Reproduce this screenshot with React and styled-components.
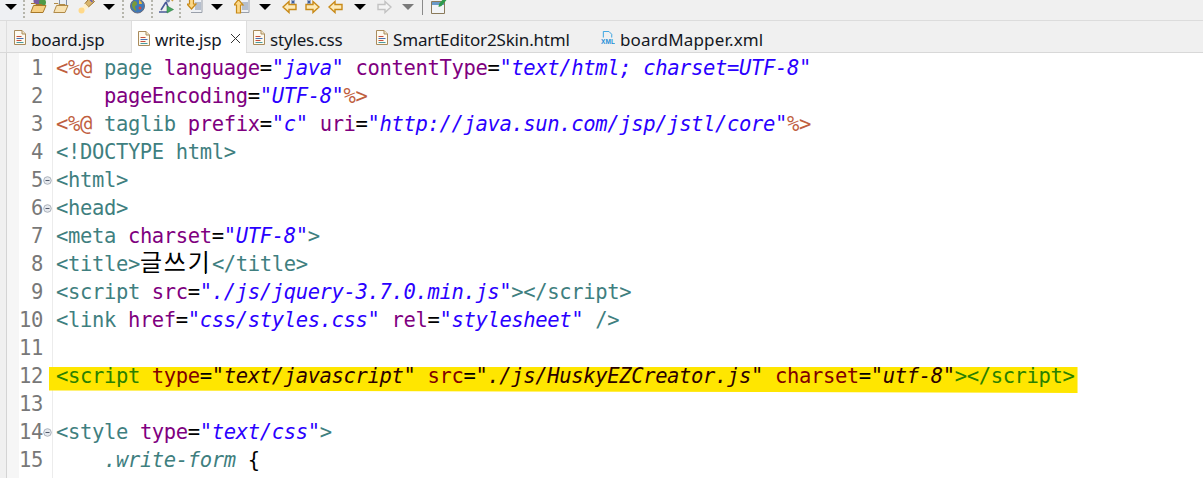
import React from "react";
import styled, { createGlobalStyle } from "styled-components";

const Global = createGlobalStyle`
  html, body { margin: 0; padding: 0; background: #fff; overflow: hidden; }
`;

const Page = styled.div`
  width: 1203px;
  height: 478px;
  overflow: hidden;
  display: flex;
  flex-direction: column;
`;

const Toolbar = styled.div`
  height: 20px;
  flex: none;
  display: flex;
  align-items: flex-end;
  background: linear-gradient(to right, #eef0f3 0 23px, #f0f0f0 23px);
  overflow: hidden;
  padding-left: 5px;
  border-bottom: 1px solid #dcdcdc;
`;

const ToolSlot = styled.div`
  flex: none;
  width: ${(p) => p.$w}px;
  margin-left: ${(p) => p.$ml || 0}px;
  height: 20px;
  display: flex;
  align-items: ${(p) => (p.$top ? "flex-start" : "flex-end")};
  justify-content: center;
  padding-bottom: ${(p) => (p.$top ? 0 : 6)}px;
  padding-top: ${(p) => (p.$top ? 4 : 0)}px;
  box-sizing: border-box;
`;

const Triangle = styled.div`
  width: 0;
  height: 0;
  border-left: 6px solid transparent;
  border-right: 6px solid transparent;
  border-top: 6px solid ${(p) => (p.$off ? "#7a7a7a" : "#000")};
`;

const Dots = styled.div`
  flex: none;
  width: 2px;
  height: 20px;
  margin-left: ${(p) => p.$ml}px;
  background: repeating-linear-gradient(to bottom, #b5b5ac 0 2px, transparent 2px 4px);
`;

const Bar = styled.div`
  flex: none;
  width: 1px;
  height: 16px;
  margin-left: ${(p) => p.$ml}px;
  margin-bottom: 5px;
  background: #8a8a8a;
`;

const TabBar = styled.div`
  height: 32px;
  flex: none;
  display: flex;
  background: #f0f0f0;
  padding-left: 6px;
  box-sizing: border-box;
  border-bottom: 1px solid #d8d8d8;
`;

const Tab = styled.div`
  flex: none;
  width: ${(p) => p.$w}px;
  height: ${(p) => (p.$active ? 32 : 31)}px;
  display: flex;
  align-items: center;
  padding-left: ${(p) => p.$pad}px;
  padding-top: 6px;
  box-sizing: border-box;
  gap: 5px;
  background: ${(p) => (p.$active ? "#fff" : "transparent")};
  border-left: 1px solid #dedede;
  font-family: "Noto Sans", "Open Sans", sans-serif;
  font-size: 17px;
  letter-spacing: ${(p) => p.$ls ?? -0.16}px;
  color: #14181f;
  white-space: nowrap;
  ${(p) => p.$plain && "border-left: none;"}
`;

const TabLabel = styled.span`
  display: block;
  line-height: 24px;
`;

const TabIcon = styled.svg`
  flex: none;
  margin-top: -4px;
`;

const Close = styled.svg`
  margin-left: 3px;
  margin-top: -4px;
  flex: none;
`;

const Editor = styled.div`
  flex: 1;
  display: flex;
  min-height: 0;
  overflow: hidden;
`;

const LeftStrip = styled.div`
  flex: none;
  width: 6px;
  background: #f0f0f0;
  border-right: 1px solid #d4d4d4;
`;

const MarkerBar = styled.div`
  flex: none;
  width: 12px;
  background: #f6f6f6;
`;

const Gutter = styled.div`
  flex: none;
  width: 33px;
  border-right: 1px solid #ececec;
  box-sizing: content-box;
  padding-top: 1px;
`;

const GutterLine = styled.div`
  height: 28px;
  display: flex;
  align-items: center;
  font-family: "DejaVu Sans Mono", monospace;
  font-size: 20.5px;
  letter-spacing: -0.36px;
  color: #787878;
  line-height: 28px;
`;

const LineNumber = styled.span`
  width: 24px;
  text-align: right;
`;

const Fold = styled.svg`
  flex: none;
  margin-top: 1px;
`;

const Code = styled.div`
  flex: 1;
  padding: 1px 0 0 3px;
  font-family: "DejaVu Sans Mono", "Noto Sans CJK KR", monospace;
  font-size: 20.5px;
  letter-spacing: -0.36px;
  line-height: 28px;
  white-space: pre;
`;

const Line = styled.div`
  height: 28px;
`;

const Tag = styled.span`
  color: ${(p) => (p.$hl ? "#2a8000" : "#3f7f7f")};
`;
const Attr = styled.span`
  color: ${(p) => (p.$hl ? "#7f0000" : "#7f007f")};
`;
const Val = styled.span`
  color: ${(p) => (p.$hl ? "#2a0000" : "#2a00ff")};
  font-style: italic;
`;
const Eq = styled.span`
  color: #000;
`;
const Jsp = styled.span`
  color: #bf5f3f;
`;
const Plain = styled.span`
  color: #000;
`;
const Selector = styled.span`
  color: #3f7f7f;
  font-style: italic;
`;
const Hangul = styled.span`
  color: #000;
  font-family: "Noto Sans CJK KR", sans-serif;
  font-size: 24px;
  line-height: 0;
  letter-spacing: 1.92px;
`;
const Caret = styled.span`
  display: inline-block;
  width: 1px;
  height: 18px;
  background: #000;
  margin: 0 5.5px 0 -6.5px;
  vertical-align: -3px;
`;
const Highlight = styled.span`
  display: inline-block;
  height: 26px;
  line-height: 18px;
  background: #ffe600;
  margin-left: -7px;
  padding: 0 3px 0 7px;
  vertical-align: top;
  margin-top: 5px;
  clip-path: polygon(0 0, 100% 0, 100% 100%, 70% 96%, 0 90%);
`;

const DocIcon = () => (
  <TabIcon width="12" height="15" viewBox="0 0 12 15">
    <path d="M.5 .5h7.5l3.5 3.5v10.5H.5z" fill="#fdfaf0" stroke="#a98b5c" />
    <path d="M8 .5v3.5h3.5" fill="#f1e6c8" stroke="#a98b5c" />
    <path d="M2.500 6.500h5" stroke="#c8503c" />
    <path d="M2.500 8.500h7" stroke="#4a6fb0" />
    <path d="M2.500 10.500h5" stroke="#c8503c" />
    <path d="M2.500 12.500h7" stroke="#4a9aa0" />
  </TabIcon>
);

const XmlIcon = () => (
  <TabIcon width="14" height="14" viewBox="0 0 15 15">
    <path d="M2.500 7V.5h6l3 3V7" fill="none" stroke="#2f9fe0" />
    <text x="0" y="14" fontFamily="Liberation Sans, sans-serif" fontSize="7" fontWeight="700" fill="#1f8fd8">XML</text>
  </TabIcon>
);

const CloseIcon = () => (
  <Close width="11" height="11" viewBox="0 0 11 11">
    <path d="M1 1l9 9M10 1l-9 9" stroke="#333" strokeWidth="1" fill="none" />
  </Close>
);

const FoldIcon = () => (
  <Fold width="9" height="9" viewBox="0 0 9 9">
    <circle cx="4.500" cy="4.500" r="3.800" fill="#e6e9ee" stroke="#a4aab4" strokeWidth="0.9" />
    <path d="M2.500 4.500h4" stroke="#50586a" strokeWidth="1" />
  </Fold>
);

const FolderBalls = () => (
  <svg width="17" height="17" viewBox="0 0 17 17">
    <circle cx="7" cy="4" r="3.500" fill="#7a5aa0" />
    <circle cx="12.500" cy="5.500" r="3.500" fill="#4f9a48" />
    <path d="M1 6.500h4l1 1h6v2" fill="#f7dea0" stroke="#a87828" />
    <path d="M.8 15.500l2.700-7h12.500l-3 7z" fill="#f6cf82" stroke="#a87828" />
  </svg>
);

const FolderDoc = () => (
  <svg width="16" height="17" viewBox="0 0 16 17">
    <path d="M6.500 2.500h7v7h-7z" fill="#e8edf4" stroke="#8090a8" />
    <path d="M1 6.500h4l1 1h6v2" fill="#f7e6c0" stroke="#b08a48" />
    <path d="M.8 15.500l2.700-7h11.500l-3 7z" fill="#f8e2b2" stroke="#b08a48" />
  </svg>
);

const Torch = () => (
  <svg width="17" height="17" viewBox="0 0 17 17">
    <path d="M7 6.500l5-6 4.500 4-6 5.500z" fill="#d9b56a" stroke="#9a7434" />
    <path d="M11.500 2l3 3" stroke="#6a5ab0" strokeWidth="1.500" />
    <path d="M7 6.500l3.500 3.500L4 16 1 15z" fill="#fff0c8" />
    <circle cx="3.500" cy="13.500" r="3" fill="#ffd98a" />
  </svg>
);

const Globe = () => (
  <svg width="15" height="16" viewBox="0 0 15 16">
    <circle cx="7.500" cy="8" r="7" fill="#3f78b8" stroke="#6a6a7a" />
    <path d="M4 3c2 0 3 1 3 3s-2 1-2 3 2 2 1 4c-2-1-4-3-4-6 0-2 1-3 2-4z" fill="#7a9a3a" />
    <path d="M9 2c2 1 3 2 3 4l-3 0z" fill="#e8b43a" />
    <circle cx="10" cy="10" r="1.500" fill="#d84a3a" />
  </svg>
);

const Runner = () => (
  <svg width="17" height="17" viewBox="0 0 17 17">
    <circle cx="11" cy="3.500" r="2" fill="#7a8ab0" />
    <path d="M9 5L4 13M9 5l2 5M2 15h8" stroke="#4a5a98" strokeWidth="1.600" fill="none" />
    <path d="M13 1l3 3" stroke="#c89a3a" strokeWidth="1.500" />
    <path d="M10 9l6.500 3.500L10 16z" fill="#48a860" stroke="#2f7a48" strokeWidth=".6" />
  </svg>
);

const ArrowDoc = ({ up }) => (
  <svg width="16" height="17" viewBox="0 0 16 17">
    <path d="M6.500 2.500h8.500v13H4" fill="#eef0f4" stroke="#9aa0aa" />
    <path d="M8 6h6M8 8h6M8 10h6M8 12h6" stroke="#7f8ea6" />
    {up ? (
      <path d="M4.500 2.500L9 8H6.500v8h-4V8H0z" fill="#fcd98a" stroke="#c88a18" strokeWidth="1.200" />
    ) : (
      <path d="M2.500 .5h4V7H9l-4.500 5L0 7h2.500z" fill="#fcd98a" stroke="#c88a18" strokeWidth="1.200" />
    )}
  </svg>
);

const NavArrow = ({ right, star, off }) => {
  const stroke = off ? "#c2c2c2" : "#c88a18";
  const fill = off ? "#f4f4f4" : "#fdeab8";
  return (
    <svg width="15" height="14" viewBox="0 0 15 14">
      <g transform={right ? "translate(15 0) scale(-1 1)" : undefined}>
        <path d="M7 1.500L1 7l6 5.500V9.500h7V4.500H7z" fill={fill} stroke={stroke} strokeWidth="1.400" />
        {star && <path d="M11 0v4M9 2h4M9.500.5l3 3M12.500.5l-3 3" stroke="#3a5a98" strokeWidth=".9" />}
      </g>
    </svg>
  );
};

const WindowPen = () => (
  <svg width="16" height="17" viewBox="0 0 16 17">
    <path d="M.5 4.500h13v12H.5z" fill="#f2f4f6" stroke="#8a7a5a" />
    <path d="M1 5h12v3H1z" fill="#6a9ac8" />
    <path d="M8 7l5-6 2.500 2-5 6-3 1z" fill="#2f9a4a" />
  </svg>
);

const lines = [
  [<Jsp>{"<%@"}</Jsp>, " ", <Tag>page</Tag>, " ", <Attr>language</Attr>, <Eq>=</Eq>, <Val>"java"</Val>, " ", <Attr>contentType</Attr>, <Eq>=</Eq>, <Val>"text/html; charset=UTF-8"</Val>],
  ["    ", <Attr>pageEncoding</Attr>, <Eq>=</Eq>, <Val>"UTF-8"</Val>, <Jsp>{"%>"}</Jsp>],
  [<Jsp>{"<%@"}</Jsp>, " ", <Tag>taglib</Tag>, " ", <Attr>prefix</Attr>, <Eq>=</Eq>, <Val>"c"</Val>, " ", <Attr>uri</Attr>, <Eq>=</Eq>, <Val>"http://java.sun.com/jsp/jstl/core"</Val>, <Jsp>{"%>"}</Jsp>],
  [<Tag>{"<!DOCTYPE html>"}</Tag>],
  [<Tag>{"<html>"}</Tag>],
  [<Tag>{"<head>"}</Tag>],
  [<Tag>{"<meta"}</Tag>, " ", <Attr>charset</Attr>, <Eq>=</Eq>, <Val>"UTF-8"</Val>, <Tag>{">"}</Tag>],
  [<Tag>{"<title>"}</Tag>, <Hangul>글쓰기</Hangul>, <Caret />, <Tag>{"</title>"}</Tag>],
  [<Tag>{"<script"}</Tag>, " ", <Attr>src</Attr>, <Eq>=</Eq>, <Val>"./js/jquery-3.7.0.min.js"</Val>, <Tag>{"></script>"}</Tag>],
  [<Tag>{"<link"}</Tag>, " ", <Attr>href</Attr>, <Eq>=</Eq>, <Val>"css/styles.css"</Val>, " ", <Attr>rel</Attr>, <Eq>=</Eq>, <Val>"stylesheet"</Val>, " ", <Tag>{"/>"}</Tag>],
  [],
  [
    <Highlight>
      <Tag $hl>{"<script"}</Tag> <Attr $hl>type</Attr><Eq>=</Eq><Val $hl>"text/javascript"</Val> <Attr $hl>src</Attr><Eq>=</Eq><Val $hl>"./js/HuskyEZCreator.js"</Val> <Attr $hl>charset</Attr><Eq>=</Eq><Val $hl>"utf-8"</Val><Tag $hl>{"></script>"}</Tag>
    </Highlight>,
  ],
  [],
  [<Tag>{"<style"}</Tag>, " ", <Attr>type</Attr>, <Eq>=</Eq>, <Val>"text/css"</Val>, <Tag>{">"}</Tag>],
  ["    ", <Selector>.write-form</Selector>, " ", <Plain>{"{"}</Plain>],
];

const folds = new Set([5, 6, 14]);

export default function App() {
  return (
    <Page>
      <Global />
      <Toolbar>
        <ToolSlot $w={12} $top><Triangle /></ToolSlot>
        <Dots $ml={6} />
        <ToolSlot $w={17} $ml={5}><FolderBalls /></ToolSlot>
        <ToolSlot $w={16} $ml={6}><FolderDoc /></ToolSlot>
        <ToolSlot $w={17} $ml={9}><Torch /></ToolSlot>
        <ToolSlot $w={12} $ml={8} $top><Triangle /></ToolSlot>
        <Dots $ml={7} />
        <ToolSlot $w={15} $ml={6}><Globe /></ToolSlot>
        <Dots $ml={6} />
        <ToolSlot $w={17} $ml={4}><Runner /></ToolSlot>
        <Dots $ml={5} />
        <ToolSlot $w={16} $ml={6}><ArrowDoc /></ToolSlot>
        <ToolSlot $w={12} $ml={8} $top><Triangle /></ToolSlot>
        <ToolSlot $w={16} $ml={11}><ArrowDoc up /></ToolSlot>
        <ToolSlot $w={12} $ml={9} $top><Triangle /></ToolSlot>
        <ToolSlot $w={15} $ml={11}><NavArrow star /></ToolSlot>
        <ToolSlot $w={15} $ml={8}><NavArrow right star /></ToolSlot>
        <ToolSlot $w={15} $ml={8}><NavArrow /></ToolSlot>
        <ToolSlot $w={12} $ml={11} $top><Triangle /></ToolSlot>
        <ToolSlot $w={15} $ml={11}><NavArrow right off /></ToolSlot>
        <ToolSlot $w={12} $ml={10} $top><Triangle $off /></ToolSlot>
        <Bar $ml={8} />
        <ToolSlot $w={16} $ml={8}><WindowPen /></ToolSlot>
      </Toolbar>
      <TabBar>
        <Tab $w={125} $pad={7}><DocIcon /><TabLabel>board.jsp</TabLabel></Tab>
        <Tab $w={115} $pad={6} $active><DocIcon /><TabLabel>write.jsp</TabLabel><CloseIcon /></Tab>
        <Tab $w={130} $pad={6}><DocIcon /><TabLabel>styles.css</TabLabel></Tab>
        <Tab $w={225} $pad={0} $plain><DocIcon /><TabLabel>SmartEditor2Skin.html</TabLabel></Tab>
        <Tab $w={200} $pad={0} $plain $ls={0.16}><XmlIcon /><TabLabel>boardMapper.xml</TabLabel></Tab>
      </TabBar>
      <Editor>
        <LeftStrip />
        <MarkerBar />
        <Gutter>
          {lines.map((_, i) => (
            <GutterLine key={i}>
              <LineNumber>{i + 1}</LineNumber>
              {folds.has(i + 1) && <FoldIcon />}
            </GutterLine>
          ))}
        </Gutter>
        <Code>
          {lines.map((parts, i) => (
            <Line key={i}>
              {parts.map((p, j) => (
                <React.Fragment key={j}>{p}</React.Fragment>
              ))}
            </Line>
          ))}
        </Code>
      </Editor>
    </Page>
  );
}
